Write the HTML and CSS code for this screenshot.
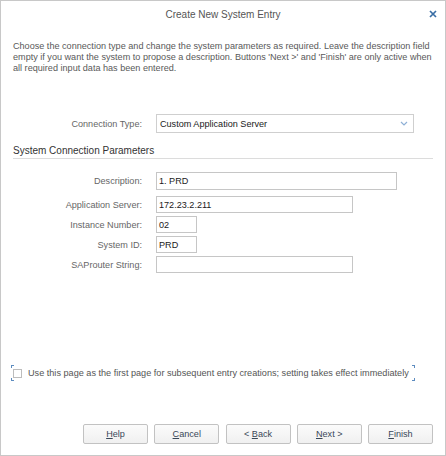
FILE: index.html
```html
<!DOCTYPE html>
<html>
<head>
<meta charset="utf-8">
<title>Create New System Entry</title>
<link rel="stylesheet" href="styles.css">
</head>
<body>
<div class="dialog">
  <div class="titlebar">
    <span></span>
    <span class="title">Create New System Entry</span>
    <span class="close">
      <svg width="8" height="8" viewBox="0 0 8 8"><path d="M1 1 L7 7 M7 1 L1 7" stroke="#3a6ea5" stroke-width="1.7" fill="none"/></svg>
    </span>
  </div>

  <p class="intro">Choose the connection type and change the system parameters as required. Leave the description field empty if you want the system to propose a description. Buttons 'Next &gt;' and 'Finish' are only active when all required input data has been entered.</p>

  <div class="row conn-row">
    <label class="lbl">Connection Type:</label>
    <div class="select">
      <span>Custom Application Server</span>
      <svg width="8" height="5" viewBox="0 0 8 5"><path d="M1 1 L4 4 L7 1" stroke="#8fb0d6" stroke-width="1.2" fill="none"/></svg>
    </div>
  </div>

  <div class="section">System Connection Parameters</div>

  <div class="fields">
    <div class="row desc-row">
      <label class="lbl">Description:</label>
      <div class="input w-desc tall">1. PRD</div>
    </div>
    <div class="row">
      <label class="lbl">Application Server:</label>
      <div class="input w-mid">172.23.2.211</div>
    </div>
    <div class="row">
      <label class="lbl">Instance Number:</label>
      <div class="input w-small">02</div>
    </div>
    <div class="row">
      <label class="lbl">System ID:</label>
      <div class="input w-small">PRD</div>
    </div>
    <div class="row">
      <label class="lbl">SAProuter String:</label>
      <div class="input w-mid"></div>
    </div>
  </div>

  <div class="check-wrap">
    <div class="focus">
      <span class="checkbox"></span>
      <span class="check-text">Use this page as the first page for subsequent entry creations; setting takes effect immediately</span>
    </div>
  </div>

  <div class="footer">
    <button class="btn"><u>H</u>elp</button>
    <button class="btn"><u>C</u>ancel</button>
    <button class="btn">&lt; <u>B</u>ack</button>
    <button class="btn"><u>N</u>ext &gt;</button>
    <button class="btn"><u>F</u>inish</button>
  </div>
</div>
</body>
</html>
```
FILE: styles.css
```css
html, body {
  margin: 0;
  padding: 0;
  background: #ffffff;
}

.dialog {
  width: 446px;
  height: 456px;
  box-sizing: border-box;
  border: 1px solid #c8c8c8;
  background: #ffffff;
  display: flex;
  flex-direction: column;
  font-family: "Liberation Sans", Arial, sans-serif;
  color: #555;
}

.titlebar {
  height: 26px;
  display: grid;
  grid-template-columns: 1fr auto 1fr;
  align-items: center;
}

.title {
  font-size: 10px;
  color: #555;
}

.close {
  justify-self: end;
  padding-right: 8px;
  display: flex;
  align-items: center;
}

.intro {
  margin: 14px 12px 0 12px;
  font-size: 9.1px;
  line-height: 10.75px;
  color: #595959;
}

.row {
  display: flex;
  align-items: center;
  gap: 14px;
}

.lbl {
  width: 129px;
  padding-left: 12px;
  box-sizing: content-box;
  text-align: right;
  font-size: 9.1px;
  color: #666;
  flex: none;
}

.conn-row {
  margin-top: 41px;
}

.select {
  width: 258px;
  height: 19px;
  box-sizing: border-box;
  border: 1px solid #cfcfcf;
  display: flex;
  align-items: center;
  justify-content: space-between;
  padding: 0 5px 0 3px;
  font-size: 9.1px;
  color: #1a1a1a;
}

.section {
  margin: 12px 12px 0 12px;
  font-size: 10px;
  line-height: 12px;
  padding-bottom: 1px;
  color: #333;
  border-bottom: 1px solid #dcdcdc;
}

.fields {
  margin-top: 13px;
  display: flex;
  flex-direction: column;
  gap: 3px;
}

.desc-row {
  margin-bottom: 3px;
}

.input {
  height: 17px;
  box-sizing: border-box;
  border: 1px solid #c6c6c6;
  padding: 0 2px;
  font-size: 9.1px;
  color: #1a1a1a;
  display: flex;
  align-items: center;
}

.input.tall {
  height: 18px;
}

.w-desc { width: 241px; }
.w-mid { width: 197px; }
.w-small { width: 41px; }

.check-wrap {
  margin-top: 91px;
  padding-left: 10px;
}

.focus {
  display: inline-flex;
  align-items: center;
  height: 16px;
  width: 404px;
  box-sizing: border-box;
  padding-left: 2px;
  background:
    linear-gradient(#5d8cc0, #5d8cc0) left top / 3px 1px no-repeat,
    linear-gradient(#5d8cc0, #5d8cc0) left top / 1px 3px no-repeat,
    linear-gradient(#5d8cc0, #5d8cc0) right top / 3px 1px no-repeat,
    linear-gradient(#5d8cc0, #5d8cc0) right top / 1px 3px no-repeat,
    linear-gradient(#5d8cc0, #5d8cc0) left bottom / 3px 1px no-repeat,
    linear-gradient(#5d8cc0, #5d8cc0) left bottom / 1px 3px no-repeat,
    linear-gradient(#5d8cc0, #5d8cc0) right bottom / 3px 1px no-repeat,
    linear-gradient(#5d8cc0, #5d8cc0) right bottom / 1px 3px no-repeat;
}

.checkbox {
  width: 9px;
  height: 9px;
  box-sizing: border-box;
  border: 1px solid #bdbdbd;
  background: #fff;
  flex: none;
  margin-top: 1px;
}

.check-text {
  margin-left: 6px;
  font-size: 9.15px;
  color: #555;
  white-space: nowrap;
}

.footer {
  margin-top: auto;
  display: flex;
  justify-content: flex-end;
  gap: 6.25px;
  padding: 0 12px 11px 0;
}

.btn {
  width: 65px;
  height: 20px;
  box-sizing: border-box;
  border: 1px solid #c2c2c2;
  border-radius: 2px;
  background: linear-gradient(#fbfbfb, #f0f0f0);
  font-family: "Liberation Sans", Arial, sans-serif;
  font-size: 9.1px;
  color: #3a4858;
  padding: 0;
}
```
